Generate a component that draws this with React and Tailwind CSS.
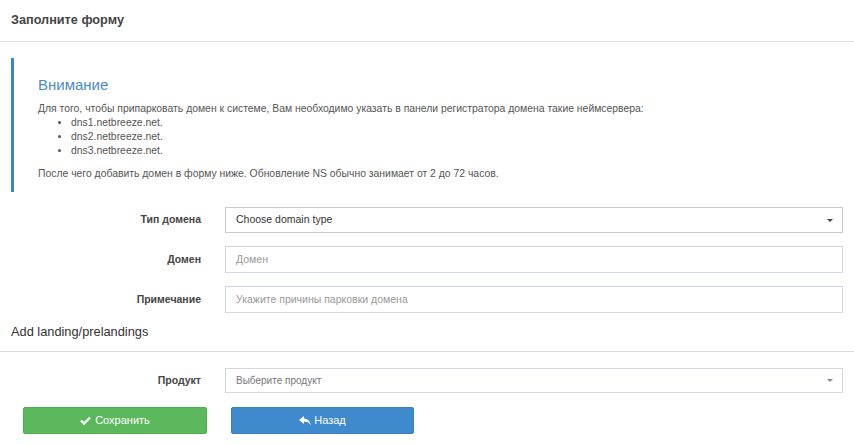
import React from 'react';

const FormRow = ({ label, children }) => (
  <div className="flex items-center">
    <div className="w-[201px] shrink-0 text-right text-[10.5px] font-bold text-[#444]">{label}</div>
    <div className="ml-[24px] mr-[11px] flex-1">{children}</div>
  </div>
);

const Caret = ({ light }) => (
  <svg width="6" height="3" viewBox="0 0 6 3" className={light ? 'text-[#888]' : 'text-[#444]'}>
    <path d="M0 0 H6 L3 3 Z" fill="currentColor" />
  </svg>
);

const CheckIcon = () => (
  <svg width="11" height="9" viewBox="0 0 11 9" className="mr-[4px]">
    <path d="M1 4.5 L4 7.5 L10 1.5" fill="none" stroke="white" strokeWidth="2.4" />
  </svg>
);

const ReplyIcon = () => (
  <svg width="12" height="10" viewBox="0 0 12 10" className="mr-[3px]">
    <path d="M5 0 L0 4 L5 8 V5.6 C8 5.6 10.2 6.5 12 9.5 C11.3 5.5 9 3 5 2.6 Z" fill="white" />
  </svg>
);

export default function App() {
  return (
    <div className="w-[854px] h-[444px] overflow-hidden bg-white font-['Liberation_Sans',Arial,sans-serif] text-[#333]">
      <div className="h-[42px] flex items-center pl-[11px] border-b border-[#ddd]">
        <h3 className="text-[12.7px] font-bold text-[#444]">Заполните форму</h3>
      </div>

      <div className="mt-[16px] ml-[11px] mr-[11px] h-[134px] border-l-[3px] border-[#3c84c2] pl-[24px] pt-[18px]">
        <h4 className="text-[15px] leading-[18px] text-[#4b8bc4]">Внимание</h4>
        <div className="mt-[8px] text-[10.4px] leading-[14px] text-[#555]">
          <p>Для того, чтобы припарковать домен к системе, Вам необходимо указать в панели регистратора домена такие неймсервера:</p>
          <ul className="list-disc pl-[33px]">
            <li>dns1.netbreeze.net.</li>
            <li>dns2.netbreeze.net.</li>
            <li>dns3.netbreeze.net.</li>
          </ul>
          <p className="mt-[9px]">После чего добавить домен в форму ниже. Обновление NS обычно занимает от 2 до 72 часов.</p>
        </div>
      </div>

      <div className="mt-[15px] flex flex-col gap-[13px]">
        <FormRow label="Тип домена">
          <div className="h-[26px] border border-[#ccc] flex items-center justify-between pl-[10px] pr-[9px] text-[10.5px] text-[#333]">
            <span>Choose domain type</span>
            <Caret />
          </div>
        </FormRow>
        <FormRow label="Домен">
          <div className="h-[27px] border border-[#d2d6de] flex items-center px-[10px] text-[10.5px] text-[#999]">Домен</div>
        </FormRow>
        <FormRow label="Примечание">
          <div className="h-[27px] border border-[#d2d6de] flex items-center px-[10px] text-[10.5px] text-[#999]">Укажите причины парковки домена</div>
        </FormRow>
      </div>

      <div className="h-[39px] flex items-center pl-[11px] border-b border-[#ddd]">
        <h4 className="text-[12.8px] text-[#333]">Add landing/prelandings</h4>
      </div>

      <div className="mt-[16px]">
        <FormRow label="Продукт">
          <div className="h-[25px] border border-[#d2d6de] flex items-center justify-between pl-[10px] pr-[9px] text-[10px] text-[#777]">
            <span>Выберите продукт</span>
            <Caret light />
          </div>
        </FormRow>
      </div>

      <div className="mt-[14px] flex gap-[24px] pl-[23px]">
        <button className="w-[184px] h-[27px] rounded-[2px] bg-[#5cb85c] border border-[#4cae4c] flex items-center justify-center text-white text-[11px]">
          <CheckIcon />
          Сохранить
        </button>
        <button className="w-[183px] h-[27px] rounded-[2px] bg-[#3f89cd] border border-[#367fc0] flex items-center justify-center text-white text-[11px]">
          <ReplyIcon />
          Назад
        </button>
      </div>
    </div>
  );
}
